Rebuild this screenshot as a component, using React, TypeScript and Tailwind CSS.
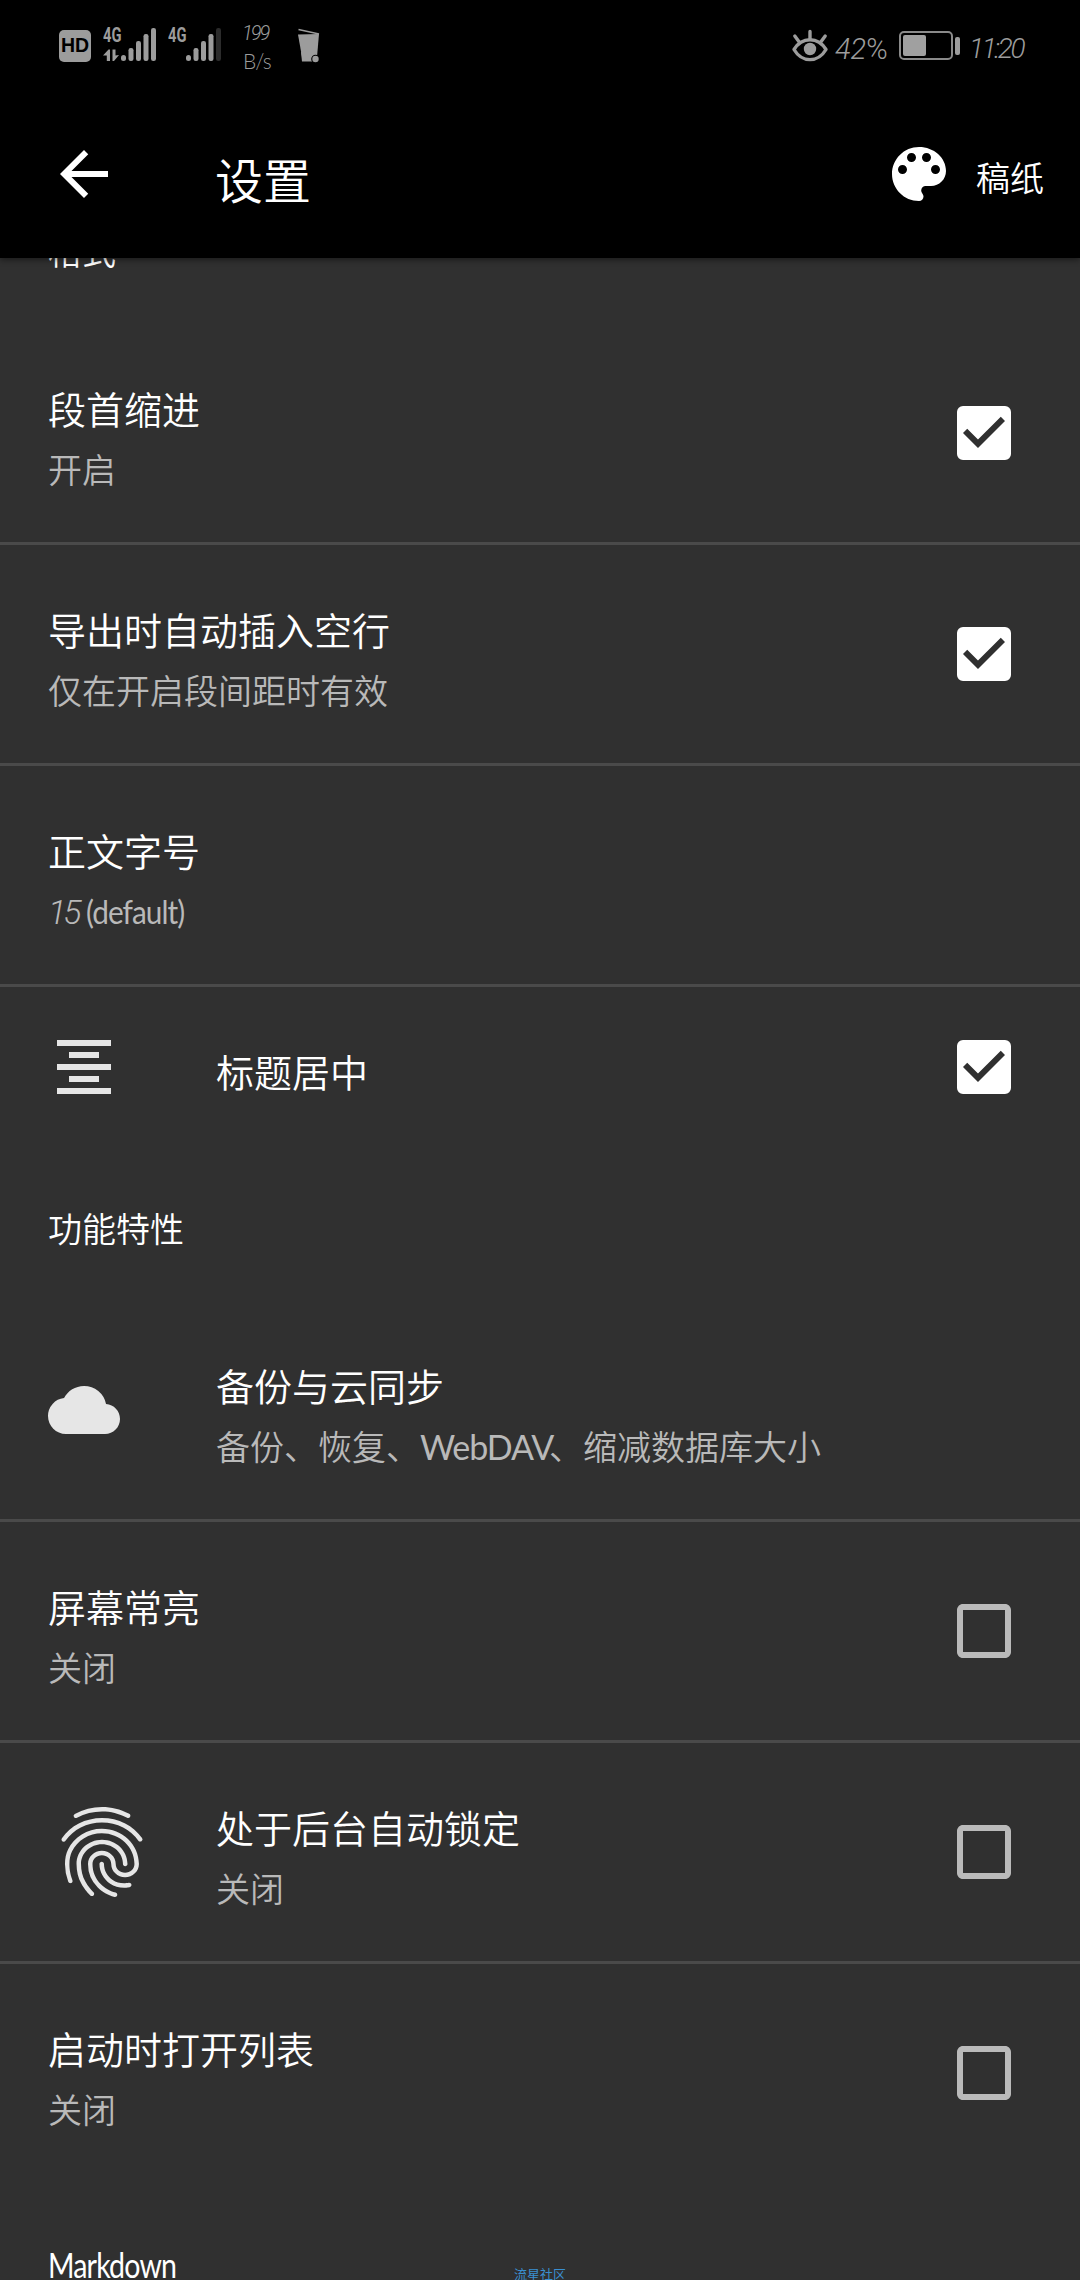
import type { ReactNode } from "react";
import {
  MdArrowBack,
  MdCloud,
  MdFingerprint,
  MdFormatAlignCenter,
  MdCheckBox,
  MdCheckBoxOutlineBlank,
} from "react-icons/md";

function StatusBar() {
  return (
    <div className="flex h-[90px] items-start bg-black pl-[59px] text-[#9c9c9c]">
      <div className="mt-[30px] flex h-[32px] w-[32px] items-center justify-center rounded-[5px] bg-[#9c9c9c]">
        <span className="font-['Liberation_Sans'] text-[19.5px] leading-none font-bold text-black">HD</span>
      </div>

      <div className="relative mt-[28px] ml-[12px] h-[34px] w-[54px]">
        <span className="block w-[18px] origin-left scale-x-[.7] font-['Roboto'] text-[21px] leading-[15px] font-bold">4G</span>
        <svg className="absolute inset-0" width="54" height="34" viewBox="0 0 54 34" fill="currentColor">
          <path d="M0 27.5 5.5 21.5h1.5V33H3.8v-5.500zM9.500 21.500h3v6l3.500-.5-5 6h-1.500z" />
          <rect x="18" y="27" width="5" height="6" rx="2.500" />
          <rect x="25.500" y="20" width="5" height="13" rx="2.200" />
          <rect x="33" y="13" width="5" height="20" rx="2.200" />
          <rect x="40.500" y="6" width="5" height="27" rx="2.200" />
          <rect x="48" y="0" width="5" height="33" rx="2.200" />
        </svg>
      </div>

      <div className="relative mt-[28px] ml-[11px] h-[34px] w-[54px]">
        <span className="block w-[18px] origin-left scale-x-[.7] font-['Roboto'] text-[21px] leading-[15px] font-bold">4G</span>
        <svg className="absolute inset-0" width="54" height="34" viewBox="0 0 54 34" fill="currentColor">
          <rect x="18" y="27" width="5" height="6" rx="2.500" />
          <rect x="25.500" y="20" width="5" height="13" rx="2.200" />
          <rect x="33" y="13" width="5" height="20" rx="2.200" />
          <rect x="40.500" y="6" width="5" height="27" rx="2.200" />
          <rect x="48" y="0" width="5" height="33" rx="2.200" fill="#2c2c2c" />
        </svg>
      </div>

      <div className="mt-[23px] ml-[20px] flex w-[32px] flex-col font-['Roboto'] font-light">
        <span className="text-[20px] leading-[20px] tracking-[-2px] italic">199</span>
        <span className="mt-[7px] ml-px font-['Lato'] text-[21px] leading-[22px] font-light tracking-[-1px]">B/s</span>
      </div>

      <svg className="mt-[28px] ml-[24px]" width="24" height="36" viewBox="0 0 24 36">
        <path d="M.5 1.500 21 6" stroke="#9c9c9c" strokeWidth="1.500" fill="none" />
        <path d="M0 6.500 21 6 19 29H4z" fill="#9c9c9c" />
        <path d="M3 24h13v9.500H4z" fill="#9c9c9c" />
        <circle cx="17.500" cy="31" r="4.300" fill="#000" />
        <circle cx="17.500" cy="31" r="3.200" fill="#9c9c9c" />
      </svg>

      <svg className="mt-[29px] ml-auto" width="36" height="34" viewBox="0 0 36 34" fill="none" stroke="currentColor" strokeWidth="3.400" strokeLinecap="round">
        <path d="M2 20.500C10 7.500 26 7.500 34 20.500 26 34 10 34 2 20.500z" strokeLinejoin="round" />
        <path d="M18 2.500v7M2.800 7l4.400 6M33.200 7l-4.400 6" />
        <circle cx="18" cy="20" r="6.200" fill="currentColor" stroke="none" />
      </svg>
      <span className="mt-[34px] ml-[7px] w-[64px] font-['Roboto'] text-[29px] leading-[30px] font-light whitespace-nowrap">
        <span className="italic">42</span>%
      </span>
      <div className="mt-[31px] flex h-[29px] w-[54px] rounded-[5px] border-2 border-[#8a8a8a] p-[2px]">
        <div className="w-[23px] rounded-[2px] bg-[#a0a0a0]" />
      </div>
      <div className="mt-[37px] ml-[2px] h-[18px] w-[5px] rounded-[2px] bg-[#9c9c9c]" />
      <span className="mt-[34px] ml-[9px] w-[111px] font-['Roboto'] text-[28px] leading-[30px] font-light tracking-[-2.4px] whitespace-nowrap italic">
        11:20
      </span>
    </div>
  );
}

function PaletteIcon() {
  return (
    <svg className="ml-auto shrink-0" width="72" height="72" viewBox="0 0 24 24" fill="currentColor">
      <path d="M12 3c-4.970 0-9 4.030-9 9s4.030 9 9 9c.83 0 1.500-.67 1.500-1.500 0-.39-.15-.74-.39-1.010-.23-.26-.38-.61-.38-.99 0-.83.67-1.500 1.500-1.500H16c2.760 0 5-2.240 5-5 0-4.420-4.030-8-9-8zm-5.500 9c-.83 0-1.500-.67-1.500-1.500S5.670 9 6.500 9 8 9.670 8 10.500 7.330 12 6.500 12zm3-4C8.670 8 8 7.330 8 6.500S8.670 5 9.500 5s1.500.67 1.500 1.500S10.330 8 9.500 8zm5 0c-.83 0-1.500-.67-1.500-1.500S13.670 5 14.500 5s1.500.67 1.500 1.500S15.330 8 14.500 8zm3 4c-.83 0-1.500-.67-1.500-1.500S16.670 9 17.500 9s1.500.67 1.500 1.500-.67 1.500-1.500 1.500z" />
    </svg>
  );
}

function AppBar() {
  return (
    <div className="relative z-10 bg-black shadow-[0_2px_6px_rgba(0,0,0,0.45)]">
      <StatusBar />
      <div className="flex h-[168px] items-center pr-[36px] pl-[48px] text-white">
        <MdArrowBack size={72} />
        <h1 className="mt-[7px] ml-[95px] text-[48px] leading-[60px]">设置</h1>
        <PaletteIcon />
        <span className="mt-[5px] ml-[21px] text-[34px] leading-[44px]">稿纸</span>
      </div>
    </div>
  );
}

function Category({ children }: { children: ReactNode }) {
  return <div className="flex h-[154px] items-center px-[48px] pt-[6px] text-[34px] text-white">{children}</div>;
}

type RowProps = {
  title: string;
  summary?: ReactNode;
  icon?: ReactNode;
  checked?: boolean;
  divider?: boolean;
};

function Row({ title, summary, icon, checked, divider }: RowProps) {
  return (
    <div className={divider ? "border-b-[3px] border-[#4a4a4a]" : ""}>
      <div className={summary ? "flex h-[218px] items-center pr-[60px] pl-[48px]" : "flex h-[160px] items-center pr-[60px] pl-[48px]"}>
        {icon && <div className="w-[168px] shrink-0 text-[#e6e6e6]">{icon}</div>}
        <div className={summary ? "flex flex-col pt-[10px]" : "flex flex-col pt-[7px]"}>
          <div className="text-[38px] leading-[60px] text-white">{title}</div>
          {summary && <div className="mt-px h-[60px] text-[34px] leading-[60px] text-[#b9b9b9]">{summary}</div>}
        </div>
        {checked !== undefined && (
          <div className="ml-auto">
            {checked ? (
              <MdCheckBox size={72} className="text-white" />
            ) : (
              <MdCheckBoxOutlineBlank size={72} className="text-[#bababa]" />
            )}
          </div>
        )}
      </div>
    </div>
  );
}

export default function App() {
  return (
    <div className="relative flex h-[2280px] w-[1080px] flex-col overflow-hidden bg-[#303030] font-['Noto_Sans_CJK_SC',sans-serif] font-[350]">
      <AppBar />
      <div className="-mt-[88px] flex flex-col">
        <Category>格式</Category>
        <Row title="段首缩进" summary="开启" checked divider />
        <Row title="导出时自动插入空行" summary="仅在开启段间距时有效" checked divider />
        <Row
          title="正文字号"
          summary={
            <div className="flex items-center pt-px font-['Lato'] text-[32px] font-normal">
              <span className="w-[38px] font-['Roboto'] text-[34px] font-light tracking-[-3px] italic">15</span>
              <span className="origin-left scale-x-[.93] tracking-[-1px]">(default)</span>
            </div>
          }
          divider
        />
        <Row title="标题居中" icon={<MdFormatAlignCenter size={72} />} checked />
        <Category>功能特性</Category>
        <Row
          title="备份与云同步"
          summary={
            <>
              备份、恢复、
              <span className="inline-block w-[129px] font-['Lato'] font-normal tracking-[-1px]">WebDAV</span>
              、缩减数据库大小
            </>
          }
          icon={<MdCloud size={72} />}
          divider
        />
        <Row title="屏幕常亮" summary="关闭" checked={false} divider />
        <Row title="处于后台自动锁定" summary="关闭" icon={<MdFingerprint size={108} />} checked={false} divider />
        <Row title="启动时打开列表" summary="关闭" checked={false} />
        <Category>
          <span className="mt-[5px] origin-left scale-x-[.84] font-['Lato'] font-normal tracking-[-1px]">Markdown</span>
        </Category>
      </div>
      <span className="absolute top-[2264px] left-[514px] text-[13px] leading-[20px] font-normal text-[#3a8fd0]">流星社区</span>
    </div>
  );
}
